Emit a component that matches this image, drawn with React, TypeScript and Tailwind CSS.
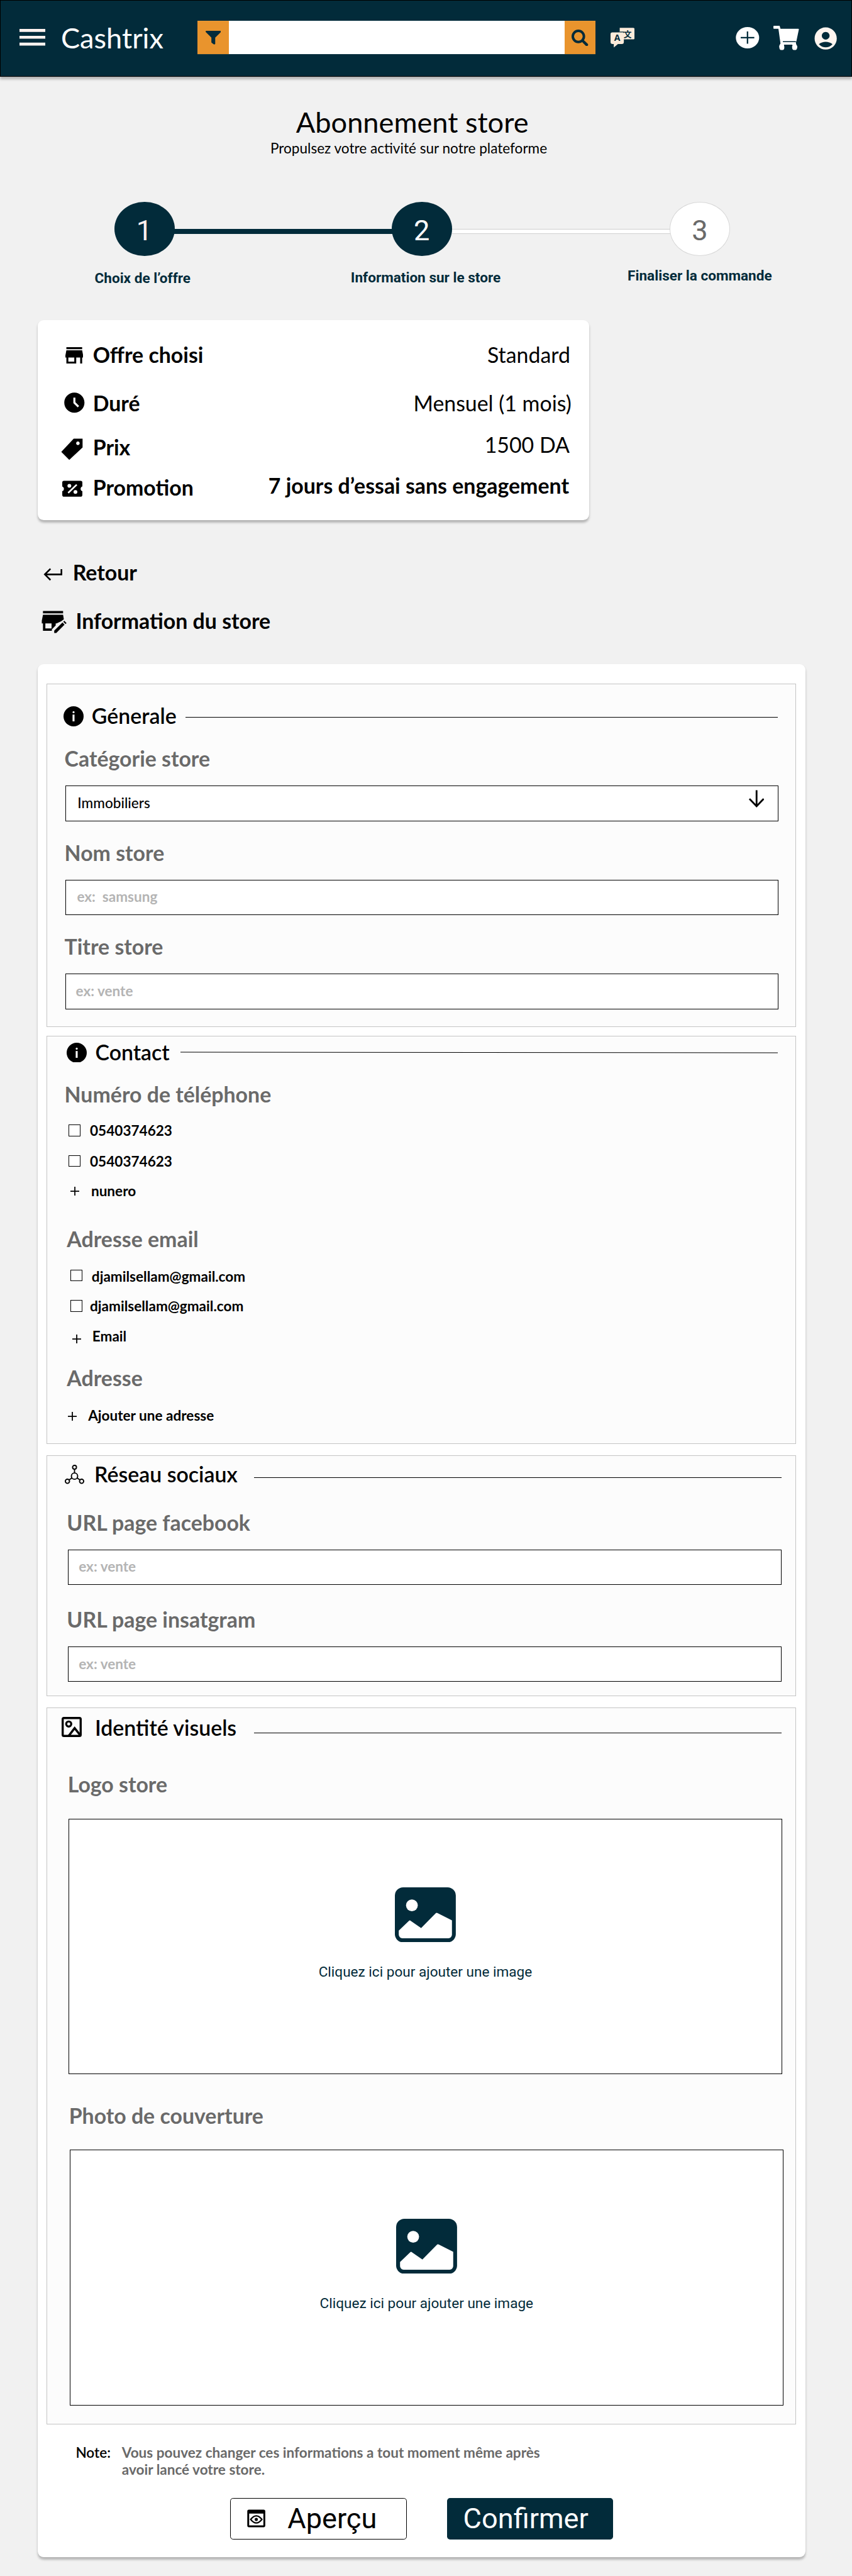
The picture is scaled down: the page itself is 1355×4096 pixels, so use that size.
import type { ReactNode } from "react";
import { MdAccessTimeFilled, MdAccountCircle } from "react-icons/md";

/* ---------- Icons ---------- */

const MenuIcon = () => (
  <svg className="mt-[48px] ml-[32px] h-[30px] w-[44px]" viewBox="0 0 44 30" fill="#fff3f0">
    <path d="M0 1h44v5H0zM0 12.6h44v5H0zM0 24.2h44v5H0z" />
  </svg>
);

const FilterIcon = () => (
  <svg className="h-[23px] w-[26px]" viewBox="4 3 16 18" preserveAspectRatio="none" fill="#022b3a">
    <path d="M14 12v7.88c.04.3-.06.62-.29.83a.996.996 0 0 1-1.41 0l-2.01-2.01a.989.989 0 0 1-.29-.83V12h-.03L4.21 4.62a1 1 0 0 1 .17-1.4c.19-.14.4-.22.62-.22h14c.22 0 .43.08.62.22a1 1 0 0 1 .17 1.4L14.03 12H14z" />
  </svg>
);

const SearchIcon = () => (
  <svg className="h-[28px] w-[28px]" viewBox="0 0 28 28" fill="none" stroke="#022b3a">
    <circle cx="11.5" cy="11.5" r="9.4" strokeWidth="4.2" />
    <path d="M18.2 18.2l3 3" strokeWidth="3.6" />
    <path d="M20.6 20.6l5 5" strokeWidth="4.6" strokeLinecap="round" />
  </svg>
);

const TranslateIcon = () => (
  <svg className="mt-[47px] ml-[25px] h-[34px] w-[41px]" viewBox="0 0 41 34">
    <path
      d="M15.500 0.300H38a3 3 0 0 1 3 3V16.700a3 3 0 0 1-3 3H22.500V24a3.500 3.500 0 0 1-3.500 3.500H12.500L5.500 33.500V27.500H3.500A3.500 3.500 0 0 1 0 24V11a3 3 0 0 1 3-3H15.500z"
      fill="#fcebda"
    />
    <path d="M15.500 7.200H22V8.600" fill="none" stroke="#022b3a" strokeWidth="1.300" />
    <text x="11.300" y="22.800" textAnchor="middle" fontSize="15" fontWeight="700" fontFamily="Open Sans, sans-serif" fill="#022b3a">
      A
    </text>
    <text x="28.700" y="15.400" textAnchor="middle" fontSize="13.500" fontWeight="700" fontFamily="Noto Sans CJK SC, sans-serif" fill="#022b3a">
      文
    </text>
  </svg>
);

const PlusCircleIcon = () => (
  <svg className="mt-[46px] ml-[171px] h-[36px] w-[40px]" viewBox="0 0 40 36">
    <ellipse cx="20" cy="18" rx="19.700" ry="18" fill="#fff" />
    <path d="M8.500 18h23M20 7.500v20.500" stroke="#022b3a" strokeWidth="2.400" />
  </svg>
);

const CartIcon = () => (
  <svg className="mt-[44px] ml-[24px] h-[41px] w-[43px]" viewBox="0 0 43 41">
    <path
      d="M1 0h9.500l1.500 5H42a1 1 0 0 1 1 1.200L39 25.500l-1 2.500 0.500 3 1 2a4.300 4.300 0 1 1-7 0H18a4.300 4.300 0 1 1-7.500-.6l1.500-2.400L8.500 5H1a1 1 0 0 1-1-1V1a1 1 0 0 1 1-1z"
      fill="#fff"
    />
    <path d="M16 26.800h22M18 32.700h14" stroke="#022b3a" strokeWidth="1.500" />
    <circle cx="14.300" cy="36.800" r="4.200" fill="#fff" />
    <circle cx="35.900" cy="36.800" r="4.200" fill="#fff" />
  </svg>
);

const StoreIcon = () => (
  <svg className="mt-[9px] ml-[7px] h-[28px] w-[30px]" viewBox="3 4 18 16" preserveAspectRatio="none">
    <path d="M12 18H6v-4h6m9 0v-2l-1-5H4l-1 5v2h1v6h10v-6h4v6h2v-6m0-10H4v2h16V4z" />
  </svg>
);

const TagIcon = () => (
  <svg className="mt-[6px] h-[37px] w-[37px]" viewBox="0 0 37 37">
    <path fillRule="evenodd" d="M21.500 0.500H36.500V15.500L14 36.500 0.500 22.800zM28.600 5.300a3 3 0 1 0 .01 0z" />
  </svg>
);

const PromoIcon = () => (
  <svg className="mt-[9px] ml-[2px] h-[28px] w-[34px]" viewBox="0 0 34 28">
    <path d="M3 0.500H31a3 3 0 0 1 3 3V10a4.200 4.200 0 0 0 0 8V24.500a3 3 0 0 1-3 3H3a3 3 0 0 1-3-3V18a4.200 4.200 0 0 0 0-8V3.500a3 3 0 0 1 3-3z" />
    <path d="M10 21L24.500 7" stroke="#fff" strokeWidth="2.800" />
    <circle cx="12" cy="9" r="3.200" fill="#fff" />
    <circle cx="22.300" cy="19.300" r="3.200" fill="#fff" />
  </svg>
);

const ReturnIcon = () => (
  <svg className="mt-[14px] h-[22px] w-[33px]" viewBox="0 0 33 22" fill="none" stroke="#000" strokeWidth="2.800">
    <path d="M30.500 2V11H2.500M12 1.500L2.500 11 12 20.500" />
  </svg>
);

const StoreEditIcon = () => (
  <svg className="mt-[4px] h-[39px] w-[43px]" viewBox="0 0 43 39">
    <path d="M2.500 0.500h34v4h-34zM2.500 7h34l1.300 7.500L33 18 25.500 21.500H24V25L17.500 31.500V34H2.500V21.500H0.500V17zM6.500 21.500v8.500h10.500V21.500z" fillRule="evenodd" />
    <path d="M21.500 33.800L35.500 20l3.500 3.700L25 37.800H21.500zM36.800 18.800l1.700-1.700 3.900 3.800-1.700 1.800z" />
  </svg>
);

const InfoIcon = () => (
  <svg className="h-[34px] w-[34px]" viewBox="0 0 34 34">
    <circle cx="17" cy="17" r="17" />
    <circle cx="17" cy="10" r="1.700" fill="#fff" />
    <path d="M15.300 14h3.300v11.500h-3.300z" fill="#fff" />
  </svg>
);

const NetworkIcon = () => (
  <svg className="h-[33px] w-[33px]" viewBox="0 0 33 33" fill="none" stroke="#000" strokeWidth="2">
    <circle cx="16.500" cy="4.300" r="3.300" />
    <circle cx="16.500" cy="19.300" r="5.300" />
    <circle cx="4.500" cy="28" r="3.500" />
    <circle cx="28.500" cy="28" r="3.500" />
    <path d="M16.500 7.600V14M11.800 22.500l-4.300 3M21.200 22.500l4.300 3" />
  </svg>
);

const FrameIcon = () => (
  <svg className="h-[34px] w-[34px]" viewBox="0 0 34 34" fill="none" stroke="#000" strokeWidth="3.600">
    <rect x="1.800" y="1.800" width="30.400" height="30.400" rx="2" />
    <circle cx="12" cy="12" r="4.300" strokeWidth="3.400" />
    <path d="M12 32L22 19l9.500 12" />
  </svg>
);

const PictureIcon = () => (
  <svg className="h-[93px] w-[103px]" viewBox="0 0 103 93">
    <rect width="103" height="93" rx="14" fill="#022b3a" />
    <circle cx="28.800" cy="30.400" r="10" fill="#fff" />
    <path
      d="M6.600 73L23.800 56.500q1.400-1.200 2.900 0L44.400 68.700 69 43.800q1.500-1.500 3.300-.3L96.500 55.800V80a6 6 0 0 1-6 6H12.600a6 6 0 0 1-6-6z"
      fill="#fff"
    />
  </svg>
);

const PreviewIcon = () => (
  <svg className="mt-[18px] ml-[28px] h-[31px] w-[31px]" viewBox="0 0 31 31">
    <path
      fillRule="evenodd"
      d="M3 0.500H28a2.700 2.700 0 0 1 2.700 2.700V27.500a2.700 2.700 0 0 1-2.700 2.700H3A2.700 2.700 0 0 1 .3 27.500V3.200A2.700 2.700 0 0 1 3 .5zM3.500 7.200V27H27.500V7.200z"
    />
    <path d="M6 17q9.500-12 19 0-9.500 12-19 0z" fill="none" stroke="#000" strokeWidth="2.300" />
    <circle cx="15.500" cy="17" r="2.700" />
  </svg>
);

/* ---------- Building blocks ---------- */

const Plus = ({ className }: { className: string }) => (
  <svg className={`h-[15px] w-[15px] shrink-0 ${className}`} viewBox="0 0 15 15" stroke="#000" strokeWidth="1.900">
    <path d="M0 7.500h15M7.500 0v15" />
  </svg>
);

const Check = ({ className }: { className: string }) => (
  <span className={`block size-[20px] shrink-0 border border-black bg-white ${className}`} />
);

const Label = ({ children, className }: { children: ReactNode; className: string }) => (
  <div className={`h-[43px] text-[36px] leading-[43px] font-bold whitespace-nowrap text-[#6a6a6a] ${className}`}>{children}</div>
);

const Item = ({ mark, children, className, gap }: { mark: ReactNode; children: ReactNode; className: string; gap: string }) => (
  <div className={`flex h-[29px] items-start text-[24px] leading-[29px] font-bold whitespace-nowrap ${className}`}>
    {mark}
    <span className={gap}>{children}</span>
  </div>
);

const Input = ({ children, className }: { children: ReactNode; className: string }) => (
  <div className={`flex h-[60px] w-[1206px] justify-between border border-black bg-white pt-[13.5px] text-[24px] leading-[29px] whitespace-pre ${className}`}>
    {children}
  </div>
);

const Section = ({ children, className }: { children: ReactNode; className: string }) => (
  <section className={`flex flex-col border border-[#c4c4c4] bg-[#fcfcfc] ${className}`}>{children}</section>
);

const Heading = ({ icon, title, row, iconBox, line }: { icon: ReactNode; title: string; row: string; iconBox: string; line: string }) => (
  <div className={`flex h-[43px] shrink-0 items-start ${row}`}>
    <span className={`shrink-0 ${iconBox}`}>{icon}</span>
    <h2 className="text-[36px] leading-[43px] font-semibold whitespace-nowrap">{title}</h2>
    <span className={`ml-auto block h-px shrink-0 bg-black ${line}`} />
  </div>
);

const Upload = ({ className }: { className: string }) => (
  <div className={`flex h-[432px] w-[1206px] flex-col items-center border border-black bg-white pt-[115px] ${className}`}>
    <PictureIcon />
    <span className="mt-[37px] font-['Roboto',sans-serif] text-[24px] leading-[28px] text-[#022b3a]">Cliquez ici pour ajouter une image</span>
  </div>
);

const Offer = ({ icon, label, value, className, valueClass }: { icon: ReactNode; label: string; value: string; className: string; valueClass: string }) => (
  <div className={`flex h-[43px] items-start text-[36px] leading-[43px] whitespace-nowrap ${className}`}>
    <span className="block w-[53.5px] shrink-0">{icon}</span>
    <span className="font-bold">{label}</span>
    <span className={`ml-auto ${valueClass}`}>{value}</span>
  </div>
);

/* ---------- Page ---------- */

const Header = () => (
  <header className="flex h-[130px] items-start border border-black bg-[#022b3a] shadow-[0_4px_4px_rgba(0,0,0,0.25)] *:-translate-y-px">
    <MenuIcon />
    <span className="mt-[35px] ml-[26px] w-[231px] text-[48px] leading-[58px] text-white">Cashtrix</span>
    <div className="mt-[35px] flex h-[56px] w-[673px] bg-white">
      <div className="flex w-[53px] items-center justify-center bg-[#e9942d] pt-px">
        <FilterIcon />
      </div>
      <div className="ml-auto flex w-[53px] items-center justify-center bg-[#e9942d] pt-px">
        <SearchIcon />
      </div>
    </div>
    <TranslateIcon />
    <PlusCircleIcon />
    <CartIcon />
    <MdAccountCircle className="mt-[43px] ml-[22px] size-[45px] text-[#fff5ef]" />
  </header>
);

const Stepper = () => (
  <div className="font-['Roboto',sans-serif]">
    <div className="mt-[76px] ml-[193px] flex w-[1041px] items-start text-center text-[48px] leading-[56px]">
      <span className="h-[92px] w-[102px] rounded-[50%] bg-[#022b3a] pt-[21px] text-[#ffefef]">1</span>
      <span className="mt-[46px] -mx-px h-[8px] flex-1 bg-[#022b3a]" />
      <span className="h-[92px] w-[102px] rounded-[50%] bg-[#022b3a] pt-[21px] text-white">2</span>
      <span className="mt-[46px] -mr-px h-[8px] flex-1 border-y border-[#d0d0d0] bg-white" />
      <span className="z-10 h-[92px] w-[102px] rounded-[50%] border border-[#d8d8d8] bg-white pt-[20px] text-[#6a6a6a]">3</span>
    </div>
    <div className="flex h-[52px] items-start pl-[160px] text-[24px] leading-[28px] font-bold whitespace-nowrap text-[#022b3a]">
      <span className="mt-[24px] w-[433px]">Choix de l’offre</span>
      <span className="mt-[23px] w-[468px]">Information sur le store</span>
      <span className="mt-[20px]">Finaliser la commande</span>
    </div>
  </div>
);

export default function App() {
  return (
    <div className="h-[4354px] w-full overflow-hidden bg-[#f1f1f1] font-['Lato',sans-serif] text-black [zoom:0.94074]">
      <Header />

      <div className="mt-[48px] ml-[457px] flex w-[480px] flex-col items-center whitespace-nowrap">
        <h1 className="text-[48px] leading-[58px]">Abonnement store</h1>
        <p className="-ml-[12px] text-[24px] leading-[29px]">Propulsez votre activité sur notre plateforme</p>
      </div>

      <Stepper />

      <section className="mt-[56px] ml-[64px] h-[338px] w-[932px] rounded-[10px] bg-white pt-[37px] pr-[32px] pl-[39.500px] shadow-[0_4px_4px_rgba(0,0,0,0.25)]">
        <Offer className="" icon={<StoreIcon />} label="Offre choisi" value="Standard" valueClass="" />
        <Offer
          className="mt-[39px]"
          icon={<MdAccessTimeFilled className="ml-[1.5px] size-[41px]" />}
          label="Duré"
          value="Mensuel (1 mois)"
          valueClass="-mr-[2px]"
        />
        <Offer className="mt-[32px]" icon={<TagIcon />} label="Prix" value="1500 DA" valueClass="-mt-[5px] mr-[1px]" />
        <Offer
          className="mt-[25px]"
          icon={<PromoIcon />}
          label="Promotion"
          value="7 jours d’essai sans engagement"
          valueClass="-mt-[3.500px] mr-[2px] font-bold"
        />
      </section>

      <div className="mt-[67px] ml-[73px] flex h-[43px] items-start text-[36px] leading-[43px] font-bold">
        <ReturnIcon />
        <span className="ml-[17px]">Retour</span>
      </div>
      <div className="mt-[39.500px] ml-[70px] flex h-[43px] items-start text-[36px] leading-[43px] font-bold">
        <StoreEditIcon />
        <span className="ml-[15px]">Information du store</span>
      </div>

      <main className="mt-[51.500px] ml-[64px] h-[3199px] w-[1298px] rounded-[10px] bg-white pt-[33px] pr-[16px] pl-[15px] shadow-[0_4px_4px_rgba(0,0,0,0.25)]">
        <Section className="h-[580px]">
          <Heading icon={<InfoIcon />} title="Génerale" row="mt-[32px] pl-[27px] pr-[30px]" iconBox="mt-[5px] mr-[14px]" line="mt-[23px] w-[1001px]" />
          <Label className="mt-[29px] pl-[29px]">Catégorie store</Label>
          <Input className="mt-[24px] ml-[30px] pl-[20px] pr-[23px]">
            <span className="font-medium">Immobiliers</span>
            <svg className="-mt-[7px] h-[31px] w-[26px]" viewBox="0 0 26 31" fill="none" stroke="#000" strokeWidth="3">
              <path d="M13 0.500V28M1 15l12 12.500L25 15" />
            </svg>
          </Input>
          <Label className="mt-[32px] pl-[29px]">Nom store</Label>
          <Input className="mt-[24px] ml-[30px] pl-[19px]">
            <span className="font-bold text-[#b4b4b4]">{"ex:  samsung"}</span>
          </Input>
          <Label className="mt-[32px] pl-[29px]">Titre store</Label>
          <Input className="mt-[24px] ml-[30px] pl-[17px]">
            <span className="font-bold text-[#b4b4b4]">ex: vente</span>
          </Input>
        </Section>

        <Section className="mt-[15px] h-[690px]">
          <Heading icon={<InfoIcon />} title="Contact" row="mt-[5px] pl-[33px] pr-[30px]" iconBox="mt-[5px] mr-[14px]" line="mt-[22px] w-[1010px] rotate-[0.06deg]" />
          <Label className="mt-[28.500px] pl-[29px]">Numéro de téléphone</Label>
          <Item className="mt-[25px] pl-[36px]" mark={<Check className="mt-[4px]" />} gap="ml-[16px]">
            0540374623
          </Item>
          <Item className="mt-[23px] pl-[36px]" mark={<Check className="mt-[4px]" />} gap="ml-[16px]">
            0540374623
          </Item>
          <Item className="mt-[21.500px] pl-[39px]" mark={<Plus className="mt-[7px]" />} gap="ml-[20px]">
            nunero
          </Item>
          <Label className="mt-[45px] pl-[33px]">Adresse email</Label>
          <Item className="mt-[27px] pl-[39px]" mark={<Check className="mt-[3px]" />} gap="ml-[16px]">
            djamilsellam@gmail.com
          </Item>
          <Item className="mt-[21.500px] pl-[39px]" mark={<Check className="mt-[4px]" />} gap="ml-[13px]">
            djamilsellam@gmail.com
          </Item>
          <Item className="mt-[21.500px] pl-[42px]" mark={<Plus className="mt-[12px]" />} gap="ml-[19px]">
            Email
          </Item>
          <Label className="mt-[35px] pl-[33px]">Adresse</Label>
          <Item className="mt-[27px] pl-[35px]" mark={<Plus className="mt-[9px]" />} gap="ml-[19px]">
            Ajouter une adresse
          </Item>
        </Section>

        <Section className="mt-[18.500px] h-[408px]">
          <Heading icon={<NetworkIcon />} title="Réseau sociaux" row="mt-[10px] pl-[29.500px] pr-[24px]" iconBox="mt-[5px] mr-[17px]" line="mt-[27px] w-[892px]" />
          <Label className="mt-[38.500px] pl-[33px]">URL page facebook</Label>
          <Input className="mt-[24px] ml-[35px] pl-[17px]">
            <span className="font-bold text-[#b4b4b4]">ex: vente</span>
          </Input>
          <Label className="mt-[37px] pl-[33px]">URL page insatgram</Label>
          <Input className="mt-[24px] ml-[35px] pl-[17px]">
            <span className="font-bold text-[#b4b4b4]">ex: vente</span>
          </Input>
        </Section>

        <Section className="mt-[18.500px] h-[1212px]">
          <Heading icon={<FrameIcon />} title="Identité visuels" row="mt-[12px] pl-[24px] pr-[24px]" iconBox="mt-[3px] mr-[22.500px]" line="mt-[30px] w-[891px]" />
          <Label className="mt-[53px] pl-[34.500px]">Logo store</Label>
          <Upload className="mt-[36px] ml-[36px]" />
          <Label className="mt-[49px] pl-[36.500px]">Photo de couverture</Label>
          <Upload className="mt-[36px] ml-[38px]" />
        </Section>

        <div className="mt-[33px] ml-[49px] flex text-[24px] leading-[29px]">
          <span className="w-[78px] font-semibold">Note:</span>
          <p className="font-bold whitespace-nowrap text-[#6a6a6a]">
            Vous pouvez changer ces informations a tout moment même après
            <br />
            avoir lancé votre store.
          </p>
        </div>

        <div className="mt-[33px] ml-[310px] flex font-['Roboto',sans-serif] text-[48px] leading-[56px]">
          <button className="flex h-[71px] w-[299px] items-start rounded-[5px] border border-black bg-white pt-[6.500px]">
            <span className="-mt-[6.500px]">
              <PreviewIcon />
            </span>
            <span className="ml-[37px]">Aperçu</span>
          </button>
          <button className="ml-[68px] flex h-[71px] w-[280px] items-start rounded-[5px] bg-[#022b3a] pt-[7.500px] pl-[27px] text-white">Confirmer</button>
        </div>
      </main>
    </div>
  );
}
